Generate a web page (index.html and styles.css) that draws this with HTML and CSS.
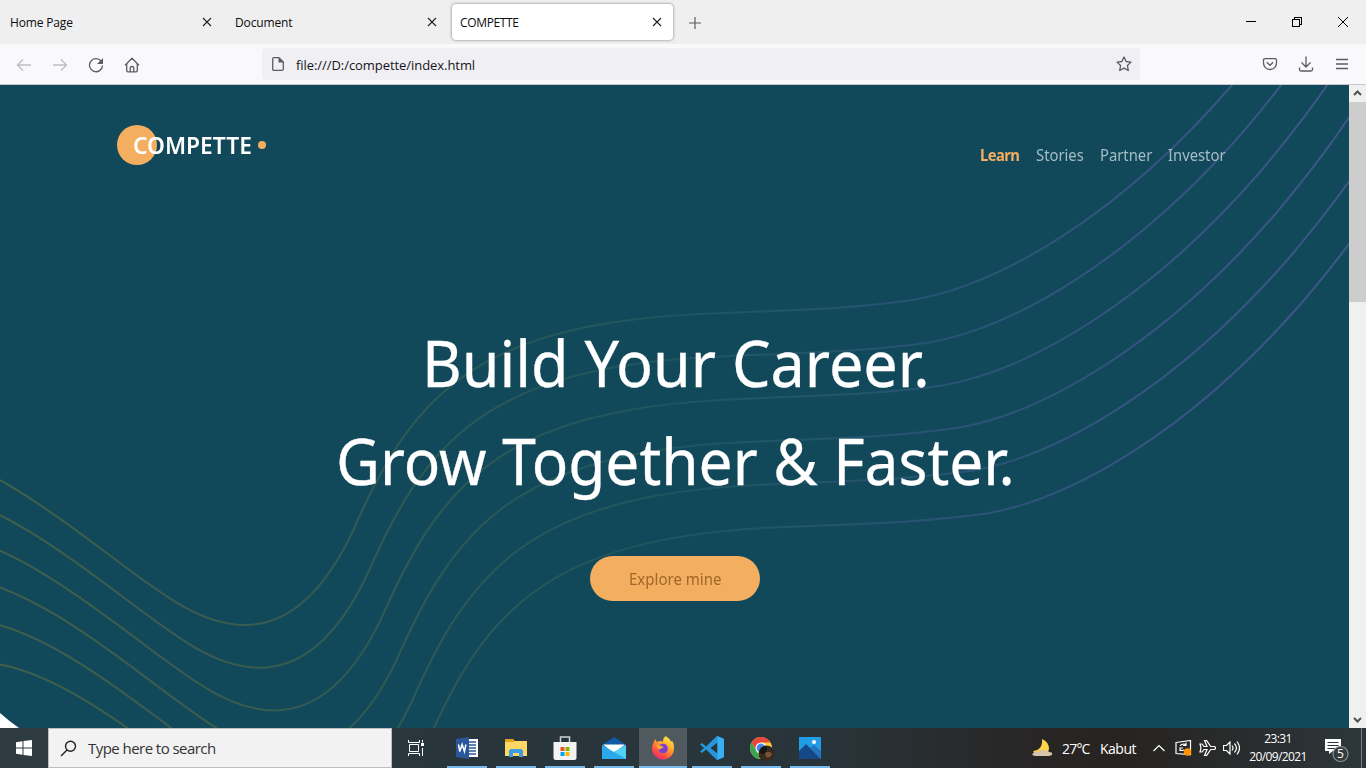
FILE: index.html
```html
<!DOCTYPE html>
<html lang="en">
<head>
<meta charset="utf-8">
<title>COMPETTE</title>
<link rel="stylesheet" href="styles.css">
</head>
<body>
<div class="tabs">
  <div class="tab"><span>Home Page</span><svg class="x" viewBox="0 0 10 10"><path d="M1 1l8 8M9 1l-8 8"/></svg></div>
  <div class="tab"><span>Document</span><svg class="x" viewBox="0 0 10 10"><path d="M1 1l8 8M9 1l-8 8"/></svg></div>
  <div class="tab active"><span class="caps">COMPETTE</span><svg class="x" viewBox="0 0 10 10"><path d="M1 1l8 8M9 1l-8 8"/></svg></div>
  <svg class="plus" viewBox="0 0 12 12"><path d="M6 0v12M0 6h12"/></svg>
  <div class="window-buttons">
    <svg viewBox="0 0 10 10" shape-rendering="crispEdges"><path d="M0 4.500h10"/></svg>
    <svg viewBox="0 0 10 10" shape-rendering="crispEdges"><path d="M.5 2.500h7v7h-7zM2.500 2V.5h7v7H8"/></svg>
    <svg viewBox="0 0 10 10"><path d="M0 0l10 10M10 0L0 10"/></svg>
  </div>
</div>
<div class="toolbar">
  <div class="nav-icons">
    <svg class="dim" viewBox="0 0 16 16"><path d="M15 8H1.500M7 2.500L1.500 8 7 13.500"/></svg>
    <svg class="dim" viewBox="0 0 16 16"><path d="M1 8h13.500M9 2.500L14.500 8 9 13.500"/></svg>
    <svg viewBox="0 0 16 16"><path d="M13.200 4.300A6.500 6.500 0 1 0 14.500 8.500"/><path class="solid" d="M15 1v6H9z"/></svg>
    <svg viewBox="0 0 16 16"><path d="M1 8.200L8 1.300l7 6.900M2.700 7v6.500q0 1.300 1.300 1.300h8q1.300 0 1.300-1.300V7M6.200 14.800V11q0-1.500 1.800-1.500T9.800 11v3.800"/></svg>
  </div>
  <div class="address">
    <svg viewBox="0 0 14 16"><path d="M3 1.600h5L12.300 6v7q0 1.300-1.300 1.300H3q-1.300 0-1.300-1.300V3Q1.700 1.600 3 1.600z"/><path class="solid" d="M7.500 1.500L12.500 6.500h-5z"/></svg>
    <span>file:///D:/compette/index.html</span>
    <svg class="star" viewBox="0 0 16 16"><path d="M8 1l2.100 4.500 4.900.6-3.600 3.400.9 5L8 12.100l-4.300 2.400.9-5L1 6.100l4.900-.6z"/></svg>
  </div>
  <div class="tools">
    <svg viewBox="0 0 16 16"><path d="M3 2.600h10q1.500 0 1.500 1.500V7a6.500 6.500 0 0 1-13 0V4.100Q1.500 2.600 3 2.600zM4.800 6.200L8 9.200l3.200-3"/></svg>
    <svg viewBox="0 0 16 16"><path d="M8 .5v10.500M3.500 6.500L8 11l4.500-4.500M1.500 11.500v2q0 1.500 1.500 1.500h10q1.500 0 1.500-1.500v-2"/></svg>
    <svg viewBox="0 0 16 16"><path d="M2 3.500h12M2 8h12M2 12.500h12"/></svg>
  </div>
</div>
<div class="view">
  <main class="page">
    <svg class="waves" viewBox="0 85 1349 643">
      <defs>
        <linearGradient id="ink" gradientUnits="userSpaceOnUse" x1="0" y1="0" x2="1349" y2="0">
          <stop offset="0" stop-color="#42604a"/><stop offset=".28" stop-color="#325a52"/><stop offset=".5" stop-color="#1f5560"/><stop offset=".68" stop-color="#275472"/><stop offset=".9" stop-color="#3a5585"/><stop offset="1" stop-color="#3f5689"/>
        </linearGradient>
        <mask id="lines" maskUnits="userSpaceOnUse" x="0" y="85" width="1349" height="643">
          <g fill="none" stroke="#fff" stroke-width="2">
            <path id="wave" d="M-73.500 451C-20 461 40 503 100 548S199 625 245 625C290 625 325 589 352 533C410 400 470 325 700 314C785 310 840 310 913 300C1000 285 1120 215 1232 85C1258 54 1280 27 1305-11"/>
            <use href="#wave" x="14.700" y="42.700"/><use href="#wave" x="29.400" y="85.400"/><use href="#wave" x="44.100" y="128.100"/><use href="#wave" x="58.800" y="170.800"/><use href="#wave" x="73.500" y="213.500"/>
          </g>
        </mask>
      </defs>
      <rect y="85" width="1349" height="643" fill="url(#ink)" mask="url(#lines)"/>
      <path d="M0 713q9 8 19 15H0z" fill="#fff"/>
    </svg>
    <header class="site-header">
      <div class="brand"><i class="disc"></i><span>COMPETTE</span><i class="dot"></i></div>
      <nav><b class="n1">Learn</b><span class="n2">Stories</span><span class="n3">Partner</span><span class="n4">Investor</span></nav>
    </header>
    <h1><span class="line1">Build Your Career.</span><span class="line2">Grow Together &amp; Faster.</span></h1>
    <button class="cta"><span>Explore mine</span></button>
  </main>
  <div class="scroll">
    <svg viewBox="0 0 17 17"><path d="M5 10l3.500-3.500L12 10"/></svg>
    <div class="thumb"></div>
    <svg class="down" viewBox="0 0 17 17"><path d="M5 7l3.500 3.500L12 7"/></svg>
  </div>
</div>
<footer class="taskbar">
  <div class="start"><svg width="16" height="16" viewBox="0 0 16 16"><path fill="#fff" d="M0 2.200L6.500 1.300v6.200H0zM7.500 1.100L16 0v7.500H7.500zM0 8.500h6.500v6.200L0 13.800zM7.500 8.500H16V16l-8.500-1.100z"/></svg></div>
  <div class="search"><svg width="17" height="17" viewBox="0 0 17 17"><circle cx="10.500" cy="6.300" r="5"/><path d="M7 10L1 16"/></svg><span>Type here to search</span></div>
  <div class="taskview"><svg width="17" height="16" viewBox="0 0 17 16" fill="none" stroke="#fff"><path d="M.5 0v2.500h11V0M.5 16v-2.500h11V16M1.500 4.500h9v7h-9zM14.500 0v2.500M14.500 8v8"/><path d="M13 4.500h3" stroke-width="3"/></svg></div>
  <div class="apps">
    <div class="app"><svg viewBox="0 0 24 24"><path fill="#fff" d="M11 3h12v18H11z"/><path stroke="#2b579a" stroke-width="1.300" d="M13 6h8M13 9h8M13 12h8M13 15h8M13 18h8"/><path fill="#2b579a" d="M1 3l13-2v22L1 21z"/><path fill="none" stroke="#fff" stroke-width="1.500" d="M3.500 8.500l1.300 7 2.300-7 2.300 7 1.500-7"/></svg></div>
    <div class="app"><svg viewBox="0 0 24 24"><path fill="#e6a117" d="M1 3h8l2 2v4H1z"/><path fill="#ffd767" d="M1 6h8l2-1h12v15H1z"/><path fill="#3e9de0" d="M5 15q0-2 2-2h10q2 0 2 2v6h-4v-4H9v4H5z"/></svg></div>
    <div class="app"><svg viewBox="0 0 24 24"><path fill="none" stroke="#cfd3d5" stroke-width="1.500" d="M7.500 7V1h9v6"/><path fill="#f3f3f3" d="M.5 6h23v16q0 2-2 2h-19q-2 0-2-2z"/><path fill="#f25022" d="M7.500 11h4v4h-4z"/><path fill="#7fba00" d="M12.500 11h4v4h-4z"/><path fill="#00a4ef" d="M7.500 16h4v4h-4z"/><path fill="#ffb900" d="M12.500 16h4v4h-4z"/></svg></div>
    <div class="app"><svg viewBox="0 0 24 24"><path fill="#0f5ca8" d="M0 9l12-8 12 8v6H0z"/><path fill="#fff" d="M1 8.500h22L14 16h-4z"/><path fill="#2aa9eb" d="M0 9l12 7 12-7v14H0z"/><path fill="#50d0f7" d="M12 16l12-7v14z"/></svg></div>
    <div class="app on"><svg viewBox="0 0 24 24"><defs><linearGradient id="fx" x1=".8" y1="0" x2=".2" y2="1"><stop stop-color="#fff04a"/><stop offset=".4" stop-color="#ffa42c"/><stop offset=".75" stop-color="#ff4b45"/><stop offset="1" stop-color="#e51e8c"/></linearGradient></defs><path fill="url(#fx)" d="M14.500 0q5 3 5.500 6l1-1.500q2.500 4 2 8A11 11 0 1 1 2.500 7L4 3q1 2 2 3 2-1.500 4-1Q10.500 5 12 6 11.500 3 14.500 0z"/><circle cx="12" cy="12.500" r="4.800" fill="#7b3fd0"/><path fill="#ffad2d" d="M5.500 9q3 0 5 1 2 .2 2 1.500-3 .7-4 2.500Q6 12 5.500 9z"/></svg></div>
    <div class="app"><svg viewBox="0 0 24 24"><path fill="#2496dd" d="M17 0l7 3v18l-7 3L6 13.500 2 17l-2-1.500L4 12 0 8.500 2 7l4 3.500z"/><path fill="#28343a" d="M17.500 6.500v11L10.500 12z"/><path fill="#39aef3" d="M17.500 0l6.500 3v18l-6.500 3z"/></svg></div>
    <div class="app"><svg class="chrome" viewBox="0 0 26 26"><circle cx="12" cy="12" r="11" fill="#ffcf36"/><path fill="#e5473a" d="M2.500 6.500A11 11 0 0 1 21.500 6.500H12L7 14z"/><path fill="#35a552" d="M2.500 6.500L8 16l4 7A11 11 0 0 1 2.500 6.500z"/><circle cx="12" cy="12" r="5.500" fill="#fff"/><circle cx="12" cy="12" r="4.400" fill="#4687ee"/><circle cx="17.500" cy="17.500" r="8" fill="#382a20"/><path fill="#101a15" d="M10 17q1-6 7-7 3 4-2 8z"/><path fill="#7a5037" d="M16 17q5-3 7 1-2 5-6 3z"/></svg></div>
    <div class="app"><svg viewBox="0 0 24 24"><path fill="#239ce6" d="M1 1h22v22H1z"/><path fill="#154887" d="M1 15l7-7 15 15H1z"/><path fill="#2473bc" d="M12 12l4-3 7 6v8z"/><circle cx="16" cy="6" r="2" fill="#fff"/></svg></div>
  </div>
  <div class="tray">
    <svg class="moon" width="22" height="20" viewBox="0 0 22 20"><path fill="#ffd34b" d="M11 1q7 3 7 10-1 6-8 6-5 0-8-4 10-1 9-12z"/><path fill="#d8c4ad" d="M5 18q-5 0-3-3 2-2 5-1 3-4 7-1 2-2 4 1 4 0 3 3l-3 1z"/></svg>
    <span class="temp">27°C</span><span class="kabut">Kabut</span>
    <svg class="chev" width="12" height="8" viewBox="0 0 12 8"><path d="M.5 7L6 1.500 11.500 7"/></svg>
    <svg class="sync" width="17" height="16" viewBox="0 0 17 16"><path d="M1 2.500L15.500.5v14L1 13.500zM5 6q1-2 4-2l2 1M11 2.500V5.500H8M5 11V8h3M5 10q2 1 4 0"/><circle cx="12.500" cy="12" r="3.700" fill="#ff9600" stroke="none"/></svg>
    <svg class="plane" width="17" height="16" viewBox="0 0 17 16"><path d="M1 4h2l2 2.500h3L5.500.6h2.200l4 5.900h3.300q1.500 0 1.500 1.500T15 9.500h-3.300l-4 5.900H5.500L8 9.500H5L3 12H1l1-4z"/></svg>
    <svg class="sound" width="17" height="14" viewBox="0 0 17 14"><path d="M.5 4.500h3l3.500-3.500v12L3.500 9.500h-3zM9 4.500q2 2.500 0 5M11.500 2.500q4 4.500 0 9M14 .5q5 6.500 0 13"/></svg>
    <div class="clock"><span class="time">23:31</span><span class="date">20/09/2021</span></div>
    <svg class="note" width="26" height="26" viewBox="0 0 26 26"><path fill="#fff" d="M1 2h16v12H9l-4 3v-3H1z"/><path stroke="#293236" d="M3.500 5.500h11M3.500 8.500h11M3.500 11.500h8"/><circle cx="16.500" cy="17" r="7.500" fill="#343b3d" stroke="#8b9092"/><text x="16.500" y="21.200" text-anchor="middle">5</text></svg>
    <i class="edge"></i>
  </div>
</footer>
</body>
</html>
```

FILE: styles.css
```css
*{box-sizing:border-box}
body{margin:0;width:1366px;height:768px;overflow:hidden;display:flex;flex-direction:column;font-family:"Open Sans","Noto Sans",sans-serif;color:#0c0c0d}
svg{display:block;flex:none}
.tabs{height:44px;background:#efefef;display:flex;align-items:flex-start;font-size:12px;flex:none}
.tab{width:225px;height:44px;padding:1px 13px 0 10px;display:flex;align-items:center;justify-content:space-between;letter-spacing:-.15px}
.active{width:221px;height:36px;margin:4px 0 0 2px;padding:0 11px 0 8px;background:#fff;border-radius:4px;box-shadow:0 0 3px #777}
.caps{letter-spacing:-.35px;padding-top:1px}
.x{width:10px;height:10px;fill:none;stroke:#222;stroke-width:1.1;margin-top:-2px}
.active .x{margin-top:-1px}
.plus{width:12px;height:12px;margin:17px 0 0 16px;stroke:#5b5b66;stroke-width:1.2}
.window-buttons{margin:17px 18px 0 auto;display:flex;gap:36px}
.window-buttons svg{width:10px;height:10px;fill:none;stroke:#000}
.toolbar{height:41px;background:#f9f9fb;border-bottom:1px solid #c9cacd;display:flex;flex:none;padding-top:4px}
.toolbar svg{width:16px;height:16px;fill:none;stroke:#5b5b66;stroke-width:1.3;stroke-linejoin:round}
.toolbar .solid{fill:#5b5b66;stroke:none}
.toolbar .dim{stroke:#bdbdc3}
.nav-icons{display:flex;gap:20px;width:262px;padding:9px 0 0 16px}
.address{width:878px;height:32px;background:#f0eff4;border-radius:4px;display:flex;align-items:center;padding:0 8px;font-size:13px}
.address span{margin-left:10px;padding-top:1px;letter-spacing:-.06px;color:#15141a}
.address .star{margin-left:auto}
.tools{display:flex;gap:20px;padding:8px 0 0 122px}
.view{height:643px;display:flex;flex:none}
.page{width:1349px;background:#11495b;position:relative;overflow:hidden;font-family:"Noto Sans","Open Sans",sans-serif}
.waves{position:absolute;inset:0;width:1349px;height:643px}
.site-header{position:relative;display:flex;justify-content:space-between;padding:40px 124px 0 117px;height:100px}
.brand{display:flex;align-items:center;height:40px;color:#fff;font-size:24px;font-weight:600}
.disc{width:40px;height:40px;border-radius:50%;background:#f3ae60}
.brand span{margin:-2px 0 0 -24px;width:119px;white-space:nowrap;position:relative;transform:scaleX(.948);transform-origin:left}
.dot{width:8px;height:8px;border-radius:50%;background:#f3ae60;margin-left:6px}
nav{display:flex;gap:16px;padding-top:19px;font-size:16px;color:#a4bdc3;white-space:nowrap}
nav>*{transform:scaleX(.925);transform-origin:left}
nav b{color:#f3ae60}
.n1{width:40px;letter-spacing:-.6px}.n2{width:48px}.n3{width:52px}.n4{width:57px}
h1{position:relative;margin:129px 0 0;color:#fff;font-size:64px;font-weight:400;line-height:98px;display:flex;flex-direction:column;align-items:flex-start;white-space:nowrap;-webkit-text-stroke:.3px #fff}
h1 span{transform-origin:left}
.line1{margin-left:422px;transform:scaleX(.955)}
.line2{margin-left:336px;transform:scaleX(.944)}
.cta{position:relative;display:block;margin:46px 0 0 590px;width:170px;height:45px;border:0;border-radius:23px;background:#f3ae60;color:#a0672a;font:16px "Noto Sans",sans-serif;padding:1px 0 0}
.cta span{display:inline-block;transform:scaleX(.94)}
.scroll{width:17px;background:#f0f0f0;display:flex;flex-direction:column}
.scroll svg{width:17px;height:17px;fill:none;stroke:#505050;stroke-width:2}
.thumb{height:200px;background:#cdcdcd}
.scroll .down{margin-top:auto}
.taskbar{height:40px;flex:none;display:flex;color:#fff;background:linear-gradient(90deg,#2e3b41,#28363c 35%,#28343a 60%,#282727 74%,#272321 82%,#292c2d 91%,#2d373b)}
.start{width:48px;display:grid;place-items:center}
.search{width:344px;background:#f2f2f2;border:1px solid #bdbdbd;color:#333;display:flex;align-items:center;padding-left:11px;font-size:15px}
.search svg{fill:none;stroke:#222;stroke-width:1.4}
.search span{margin-left:11px;letter-spacing:-.55px}
.taskview{width:51px;padding:12px 0 0 16px}
.apps{display:flex;gap:1px}
.app{width:48px;height:40px;padding:8px 12px 0;border-bottom:2px solid transparent;position:relative}
.app::after{content:"";position:absolute;left:4px;right:4px;bottom:-2px;height:2px;background:#76b9ed}
.app.on{background:#50595d}
.app.on::after{left:0;right:0}
.app svg{width:24px;height:24px}
.app .chrome{width:26px;height:26px}
.tray{margin-left:auto;width:335px;display:flex;align-items:center;white-space:nowrap;font-size:14px}
.tray svg{fill:none;stroke:#fff;stroke-width:1.2}
.tray .moon{stroke:none}
.temp{margin-left:9px;width:38px;letter-spacing:-.8px}
.kabut{width:44px;letter-spacing:-.5px}
.tray .chev{margin-left:9px}.tray .sync{margin-left:10px}.tray .plane{margin-left:7px}.tray .sound{margin-left:7px}
.clock{width:62px;margin-left:7px;font-size:12px;line-height:18px;display:flex;flex-direction:column;align-items:center;letter-spacing:-.6px}
.note{margin:3px 0 0 15px}
.tray .note{stroke:none}
.note text{fill:#fff;font:12px "Open Sans",sans-serif}
.edge{margin-left:auto;width:1px;height:40px;background:#7b8183;margin-right:4px}
```
